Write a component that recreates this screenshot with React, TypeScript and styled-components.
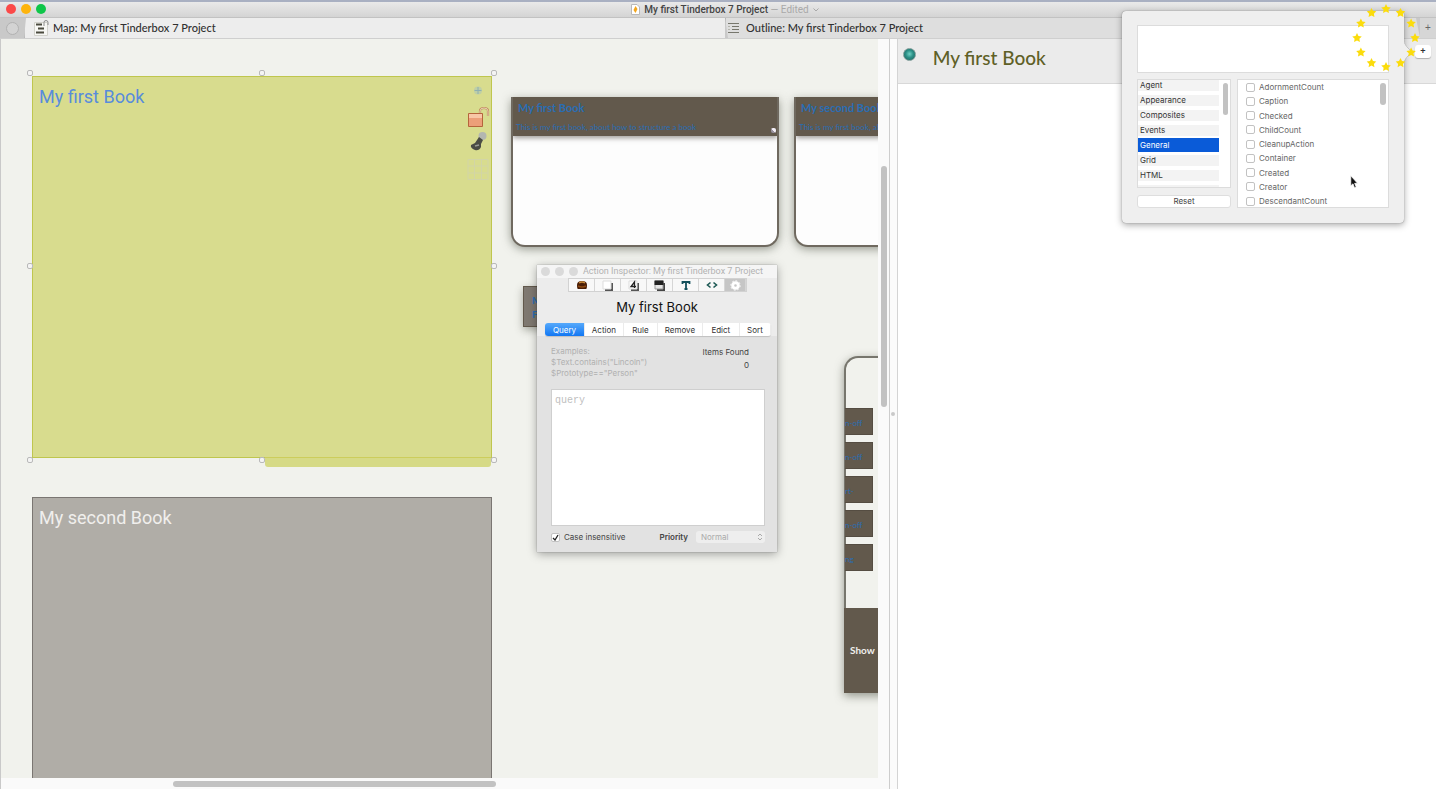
import React from 'react';
import styled, { createGlobalStyle } from 'styled-components';

const sans = '"Liberation Sans", Arial, sans-serif';
const ui = 'Inter, "Liberation Sans", sans-serif';
const human = 'Lato, "Open Sans", sans-serif';
const grotesk = 'Roboto, "Liberation Sans", sans-serif';
const brown = '#62594c';
const blue = '#2a6db3';

const Global = createGlobalStyle`
  *, *::before, *::after { box-sizing: border-box; }
  html, body { margin: 0; }
  body { font-family: ${ui}; color: #222; background: #fff; }
  button, input, textarea, select { font: inherit; color: inherit; margin: 0; }
  h1, h2, h3, p, ul { margin: 0; padding: 0; font-weight: 400; }
`;

const Window = styled.div`
  position: relative;
  display: flex;
  flex-direction: column;
  height: 100vh;
  min-height: 720px;
  overflow: hidden;
`;

const TitleBar = styled.header`
  position: relative;
  flex: none;
  display: flex;
  align-items: center;
  justify-content: center;
  height: 18px;
  border-top: 2px solid #a9b0c2;
  border-bottom: 1px solid #c2c2c2;
  background: linear-gradient(#e9e9e9, #d4d4d4);
`;

const Lights = styled.div`
  position: absolute;
  left: 6px;
  top: 2px;
  display: flex;
  gap: 5px;
`;

const Light = styled.button<{ $color: string }>`
  width: 10px;
  height: 10px;
  padding: 0;
  border: 0;
  border-radius: 50%;
  background: ${(p) => p.$color};
`;

const WindowTitle = styled.h1`
  display: flex;
  align-items: center;
  gap: 4px;
  padding-left: 14px;
  font: 10px/14px ${grotesk};
  font-weight: 500;
  color: #444;
`;

const Muted = styled.span`
  font-weight: 400;
  color: #a9a9a9;
`;

const TabBar = styled.nav`
  flex: none;
  display: grid;
  grid-template-columns: 24px minmax(0, 701fr) minmax(0, 695fr) 16px;
  height: 21px;
  background: #c9c9c9;
  border-bottom: 1px solid #cfcfcf;
`;

const TabCircle = styled.button`
  justify-self: center;
  align-self: center;
  width: 13px;
  height: 13px;
  padding: 0;
  border: 1px solid #b2b2b2;
  border-radius: 50%;
  background: #d3d3d3;
`;

const Tab = styled.button<{ $active?: boolean }>`
  position: relative;
  display: flex;
  align-items: center;
  gap: ${(p) => (p.$active ? 4 : 6)}px;
  padding: 0 0 0 ${(p) => (p.$active ? 10 : 3)}px;
  border: 0;
  background: ${(p) => (p.$active ? '#ededed' : '#dedede')};
  clip-path: ${(p) =>
    p.$active ? 'polygon(2px 0, 100% 0, 100% 100%, 0 100%)' : 'polygon(0 0, calc(100% - 4px) 0, 100% 100%, 3px 100%)'};
  box-shadow: inset 1px 0 #b5b5b5;
  font: 11px/20px ${human};
  font-weight: 500;
  color: #303030;
  text-align: left;
`;

const AddTab = styled.button`
  padding: 0;
  border: 0;
  background: #d6d6d6;
  font: 10px/20px ${sans};
  color: #666;
`;

const Main = styled.main`
  flex: 1;
  min-height: 0;
  display: grid;
  grid-template-columns: minmax(0, 623fr) 8px minmax(0, 377fr);
`;

const MapPane = styled.section`
  display: grid;
  grid-template-columns: minmax(0, 1fr) 11px;
  grid-template-rows: minmax(0, 1fr) 11px;
  border-left: 1px solid #c9c9c9;
  border-right: 1px solid #cdcdcd;
  background: #fafafa;
`;

const Canvas = styled.div`
  position: relative;
  overflow: hidden;
  background: #f1f2ed;
`;

const Placed = styled.div<{ $x: number; $y: number; $w?: number; $h?: number }>`
  position: absolute;
  left: ${(p) => p.$x}px;
  top: ${(p) => p.$y}px;
  ${(p) => (p.$w ? `width: ${p.$w}px;` : '')}
  ${(p) => (p.$h ? `height: ${p.$h}px;` : '')}
`;

const Adornment = styled(Placed)<{ $fill: string; $edge: string; $ink: string }>`
  padding: 6px;
  border: 1px solid ${(p) => p.$edge};
  background: ${(p) => p.$fill};
  color: ${(p) => p.$ink};
`;

const AdornmentTitle = styled.h2`
  font: 18px/28px ${grotesk};
`;

const AdornmentTail = styled(Placed)`
  border-top: 1px solid #cccd5c;
  border-radius: 0 0 3px 3px;
  background: #d6da86;
`;

const Handle = styled(Placed)`
  width: 6px;
  height: 6px;
  border: 1px solid #b9b9b9;
  border-radius: 2px;
  background: #f4f4f4;
`;

const AdornmentTools = styled.div`
  position: absolute;
  top: 7px;
  right: 1px;
  display: flex;
  flex-direction: column;
  align-items: center;
  width: 24px;
`;

const Card = styled(Placed)`
  overflow: hidden;
  border: 2px solid #6f695f;
  border-top: 0;
  border-radius: 0 0 14px 14px;
  background: #fdfdfd;
`;

const CardShadow = styled(Placed)`
  border-radius: 0 0 14px 14px;
  box-shadow: 0 3px 10px rgba(70, 75, 60, 0.55);
`;

const CardHead = styled.header`
  position: relative;
  height: 39px;
  padding: 3px;
  background: ${brown};
  box-shadow: 0 2px 5px rgba(60, 55, 50, 0.5);
  color: ${blue};
  white-space: nowrap;
`;

const CardTitle = styled.h3`
  padding-left: 2px;
  font: 700 11px/16px ${human};
`;

const CardText = styled.p`
  padding-top: 5px;
  font: 8px/12px ${human};
`;

const CardMark = styled.i`
  position: absolute;
  right: 1px;
  bottom: 3px;
  width: 5px;
  height: 5px;
  border-radius: 2px;
  background: linear-gradient(45deg, #9a93a0 45%, #f2eef6 50%);
`;

const NoteStub = styled(Placed)`
  padding: 6px 8px;
  border: 1px solid ${brown};
  background: #7f7971;
  box-shadow: 0 3px 8px rgba(70, 75, 60, 0.45);
  color: ${blue};
  font: 700 10px/14px ${human};
`;

const Shelf = styled(Placed)`
  display: flex;
  flex-direction: column;
  justify-content: space-between;
  border: 2px solid #77766d;
  border-width: 2px 0 0 2px;
  border-radius: 14px 0 0 0;
  background: #f1f2ed;
  box-shadow: 0 3px 10px rgba(70, 75, 60, 0.55);
`;

const ChipList = styled.ul`
  display: flex;
  flex-direction: column;
  gap: 7px;
  margin-left: -1px;
  padding-top: 50px;
  list-style: none;
`;

const Chip = styled.li`
  width: 28px;
  height: 27px;
  border: 1px solid #554d42;
  border-left: 0;
  background: ${brown};
  color: ${blue};
  font: 8px/28px ${human};
`;

const ShelfFoot = styled.div`
  height: 85px;
  margin-left: -2px;
  padding-left: 6px;
  background: ${brown};
  color: #f0efec;
  font: 700 10px/85px ${human};
`;

const VTrack = styled.div`
  display: flex;
  justify-content: center;
  padding: 127px 0 0 2px;
`;

const HTrack = styled.div`
  grid-column: 1 / -1;
  display: flex;
  align-items: center;
  padding-left: 172px;
`;

const Thumb = styled.i<{ $w: number; $h: number }>`
  width: ${(p) => p.$w}px;
  height: ${(p) => p.$h}px;
  border-radius: 3px;
  background: #c2c2c2;
`;

const Splitter = styled.div`
  display: flex;
  align-items: center;
  justify-content: center;
  border-right: 1px solid #d4d4d4;
  background: #fbfbfb;
`;

const SplitDot = styled.i`
  width: 4px;
  height: 4px;
  border-radius: 2px;
  background: #c9c9c9;
`;

const TextPane = styled.section`
  display: flex;
  flex-direction: column;
  min-width: 0;
  background: #fff;
`;

const TextHead = styled.header`
  display: flex;
  align-items: flex-start;
  height: 45px;
  padding: 6px 5px;
  border-bottom: 1px solid #d8d8d8;
  background: #ebebeb;
`;

const Orb = styled.i`
  width: 13px;
  height: 13px;
  margin: 3px 17px 0 0;
  border: 1px solid #7d9b98;
  border-radius: 50%;
  background: radial-gradient(circle at 50% 45%, #6fd0c4, #2b8f86 45%, #1d5f59);
`;

const NoteTitle = styled.h2`
  flex: 1;
  font: 19px/26px ${human};
  font-weight: 500;
  color: #5f6026;
`;

const PlusButton = styled.button`
  width: 16px;
  height: 13px;
  padding: 0;
  border: 0;
  border-radius: 3px;
  background: #fff;
  box-shadow: 0 1px 1px rgba(0, 0, 0, 0.25);
  font: 700 9px/13px ${sans};
  color: #333;
`;

const NoteBody = styled.div`
  flex: 1;
`;

/* Inspector */

const Inspector = styled.aside`
  position: absolute;
  left: 537px;
  top: 265px;
  display: flex;
  flex-direction: column;
  width: 240px;
  height: 287px;
  background: #e2e2e2;
  box-shadow: 0 2px 9px rgba(0, 0, 0, 0.35), 0 0 1px rgba(0, 0, 0, 0.4);
  font: 8px/10px ${ui};
`;

const InspectorTop = styled.div`
  flex: none;
  background: #ececec;
`;

const InspectorBar = styled.div`
  display: flex;
  align-items: center;
  gap: 5px;
  height: 13px;
  padding-left: 4px;
  background: #f5f5f5;
  color: #b2b2b2;
  white-space: nowrap;
  font: 9px/13px ${grotesk};
`;

const GreyDot = styled.i`
  width: 9px;
  height: 9px;
  border-radius: 50%;
  background: #dadada;
`;

const ToolStrip = styled.div`
  display: flex;
  width: 179px;
  height: 14px;
  margin-left: 31px;
  border: 1px solid #d2d2d2;
  background: #f8f8f8;
`;

const ToolCell = styled.button<{ $on?: boolean }>`
  flex: ${(p) => (p.$on ? '0 0 21px' : '1')};
  display: flex;
  align-items: center;
  justify-content: center;
  padding: 0;
  border: 0;
  border-right: 1px solid #d6d6d6;
  background: ${(p) => (p.$on ? '#c6c6c6' : 'transparent')};
`;

const InspectorTitle = styled.h2`
  padding: 5px 0 6px;
  text-align: center;
  font: 13px/20px ${ui};
  color: #111;
`;

const Segments = styled.div`
  display: flex;
  height: 13px;
  margin: 0 6px 0 8px;
  border-radius: 3px;
  background: #fff;
  box-shadow: 0 1px 1px rgba(0, 0, 0, 0.15);
  overflow: hidden;
`;

const Segment = styled.button<{ $w: number; $on?: boolean }>`
  flex: ${(p) => p.$w} 1 0;
  min-width: 0;
  padding: 0;
  border: 0;
  border-right: 1px solid #ebebeb;
  background: ${(p) => (p.$on ? 'linear-gradient(#56a9fb, #1277f3)' : 'transparent')};
  color: ${(p) => (p.$on ? '#fff' : '#333')};
  font: 8px/12px ${ui};
`;

const InfoRow = styled.div`
  display: flex;
  justify-content: space-between;
  padding: 10px 28px 0 14px;
  margin-bottom: 10px;
`;

const Examples = styled.p`
  color: #b0b0b0;
  line-height: 11px;
`;

const Found = styled.p`
  text-align: right;
  color: #444;
  line-height: 13px;
`;

const QueryBox = styled.textarea`
  flex: 1;
  margin: 0 12px 0 14px;
  padding: 5px 3px;
  border: 1px solid #cfcfcf;
  background: #fff;
  resize: none;
  outline: 0;
  font: 10px/12px "Liberation Mono", monospace;
  &::placeholder { color: #c0c0c0; opacity: 1; }
`;

const InspectorFoot = styled.div`
  display: flex;
  align-items: center;
  height: 26px;
  padding: 0 12px 4px 14px;
  color: #444;
`;

const CaseLabel = styled.label`
  flex: 1;
  display: flex;
  align-items: center;
  gap: 4px;
`;

const CheckBox = styled.input`
  appearance: none;
  flex: none;
  width: 9px;
  height: 9px;
  border: 1px solid #c2c2c2;
  border-radius: 2px;
  background: #fff;
  &:checked {
    background: #fff url("data:image/svg+xml,%3Csvg xmlns='http://www.w3.org/2000/svg' viewBox='0 0 9 9'%3E%3Cpath d='M2 5l2 2 3-5' fill='none' stroke='%23222' stroke-width='1.3'/%3E%3C/svg%3E") center / 9px;
  }
`;

const PriorityLabel = styled.label`
  margin-right: 8px;
  font-weight: 600;
`;

const SelectWrap = styled.span`
  position: relative;
  display: flex;
  width: 69px;
`;

const Select = styled.select`
  appearance: none;
  width: 100%;
  height: 12px;
  padding: 0 5px;
  border: 0;
  border-radius: 3px;
  background: #eee;
  color: #aaa;
  font: 8px/12px ${ui};
`;

const Carets = styled.svg`
  position: absolute;
  right: 2px;
  top: 2px;
  pointer-events: none;
`;

/* Attribute popover */

const Popover = styled.div`
  position: absolute;
  top: 11px;
  right: 32px;
  display: flex;
  flex-direction: column;
  gap: 6px;
  width: 282px;
  height: 212px;
  padding: 14px 15px;
  border-radius: 4px;
  background: #efefef;
  box-shadow: 0 2px 7px rgba(0, 0, 0, 0.35), 0 0 1px rgba(0, 0, 0, 0.5);
  font: 9px/12px ${ui};
`;

const PopArrow = styled.svg`
  position: absolute;
  left: 100%;
  top: 31px;
`;

const KeyBox = styled.textarea`
  display: block;
  width: 100%;
  height: 48px;
  border: 1px solid #dcdcdc;
  background: #fff;
  resize: none;
  outline: 0;
`;

const Columns = styled.div`
  display: grid;
  grid-template-columns: 94px 1fr;
  gap: 6px;
  height: 129px;
`;

const LeftColumn = styled.div`
  display: flex;
  flex-direction: column;
  gap: 7px;
  min-height: 0;
`;

const ListFrame = styled.div`
  flex: 1;
  display: flex;
  justify-content: space-between;
  min-height: 0;
  padding-right: 2px;
  border: 1px solid #dcdcdc;
  background: #fff;
  overflow: hidden;
`;

const CategoryList = styled.ul`
  width: 81px;
  list-style: none;
`;

const Category = styled.li<{ $on?: boolean }>`
  height: 15px;
  padding-left: 2px;
  background: ${(p) => (p.$on ? '#0a5bd8' : 'linear-gradient(#f3f3f3 11px, #fff 11px)')};
  color: ${(p) => (p.$on ? '#fff' : '#333')};
  font: 8px/11px ${ui};
  ${(p) =>
    p.$on
      ? `
    position: relative;
    height: 14px;
    margin: -2px 0 3px;
    line-height: 14px;
  `
      : ''}
`;

const ResetButton = styled.button`
  flex: none;
  height: 13px;
  padding: 0;
  border: 1px solid #dedede;
  border-radius: 3px;
  background: #fff;
  color: #444;
  font: 8px/11px ${ui};
`;

const AttributeList = styled.div`
  display: flex;
  flex-direction: column;
  justify-content: space-between;
  padding-top: 1px;
`;

const Attribute = styled.label`
  display: flex;
  align-items: center;
  gap: 4px;
  height: 12px;
  padding-left: 8px;
  color: #666;
  font: 8px/12px ${ui};
`;

const Slot = styled.div`
  padding-top: 3px;
`;

const Stars = styled.svg`
  position: absolute;
  right: 16px;
  top: 3px;
  pointer-events: none;
`;

const Cursor = styled.svg`
  position: absolute;
  right: 78px;
  top: 175px;
  pointer-events: none;
`;

const handles = [
  [26, 31], [258, 31], [490, 31],
  [26, 224], [490, 224],
  [26, 418], [258, 418], [490, 418],
];

const categories = ['Agent', 'Appearance', 'Composites', 'Events', 'General', 'Grid', 'HTML', 'Map'];
const attributes = [
  'AdornmentCount', 'Caption', 'Checked', 'ChildCount', 'CleanupAction',
  'Container', 'Created', 'Creator', 'DescendantCount',
];
const segments: [string, number][] = [
  ['Query', 40], ['Action', 39], ['Rule', 34], ['Remove', 45], ['Edict', 37], ['Sort', 31],
];
const chips = ['n-off', 'n-off', 'rt-', 'n-off', 'ng'];

const star = (cx: number, cy: number, r: number) =>
  Array.from({ length: 10 }, (_, i) => {
    const a = -Math.PI / 2 + (i * Math.PI) / 5;
    const d = i % 2 ? r * 0.5 : r;
    return `${(cx + d * Math.cos(a)).toFixed(2)},${(cy + d * Math.sin(a)).toFixed(2)}`;
  }).join(' ');

const StarRing = () => (
  <Stars width="68" height="70" viewBox="0 0 68 70" aria-hidden>
    {Array.from({ length: 12 }, (_, i) => {
      const a = (i * Math.PI) / 6;
      return <polygon key={i} points={star(34 + 29 * Math.sin(a), 35 - 29 * Math.cos(a), 5)} fill="#fbdc0c" />;
    })}
  </Stars>
);

export default function App() {
  return (
    <Window>
      <Global />
      <TitleBar>
        <Lights>
          <Light $color="#fb4948" aria-label="Close" />
          <Light $color="#fdb40d" aria-label="Minimize" />
          <Light $color="#0fc64a" aria-label="Zoom" />
        </Lights>
        <WindowTitle>
          <svg width="9" height="11" viewBox="0 0 9 11">
            <path d="M.5.5h5.500l2.500 2.500v7.500h-8z" fill="#fff" stroke="#b9b9b9" />
            <path d="M4.500 2 6.500 5 4.500 9 2.500 6z" fill="#f3a61c" />
          </svg>
          <span>My first Tinderbox 7 Project <Muted>— Edited</Muted></span>
          <svg width="6" height="4" viewBox="0 0 6 4"><path d="M.5.5 3 3 5.500.5" fill="none" stroke="#a9a9a9" /></svg>
        </WindowTitle>
      </TitleBar>

      <TabBar>
        <TabCircle aria-label="Tab options" />
        <Tab $active>
          <svg width="15" height="16" viewBox="0 0 15 16">
            <path d="M.5 2.500h13v13H.5z" fill="#f7f7f4" stroke="#d2d2cc" />
            <path d="M2 4.500h6M4 8.500h6M2 12.500h8" stroke="#4a4a3e" strokeWidth="1.800" />
            <path d="M10 6V2.500q0-2 2-2t2 2V5" fill="none" stroke="#8b8b8b" />
          </svg>
          Map: My first Tinderbox 7 Project
        </Tab>
        <Tab>
          <svg width="12" height="12" viewBox="0 0 12 12">
            <path d="M0 1.500h11M4 4.500h7M4 7.500h7M0 10.500h11" stroke="#77776d" />
            <path d="M0 4.500h2M0 7.500h2" stroke="#b5b5ad" />
          </svg>
          Outline: My first Tinderbox 7 Project
        </Tab>
        <AddTab aria-label="New tab">+</AddTab>
      </TabBar>

      <Main>
        <MapPane>
          <Canvas>
            <Adornment $x={31} $y={37} $w={460} $h={382} $fill="#d8dc8e" $edge="#bfc64e" $ink="#588cdc">
              <AdornmentTitle>My first Book</AdornmentTitle>
              <AdornmentTools>
                <svg width="24" height="98" viewBox="0 0 24 98">
                  <circle cx="12" cy="6.500" r="4" fill="#bfcfa6" />
                  <path d="M12 3v7M8.500 6.500h7" stroke="#8fb0b0" />
                  <path d="M14 33v-6q0-3 4-3t4 3v5" fill="none" stroke="#c08a5c" strokeWidth="2.200" />
                  <path d="M14 33v-6q0-3 4-3t4 3v5" fill="none" stroke="#f2e2c4" strokeWidth=".8" />
                  <path d="M2.500 29.500h14v13h-14z" fill="#ec9f79" stroke="#b5653c" />
                  <path d="M3 32h13" stroke="#f8c7a6" strokeWidth="4" />
                  <circle cx="16.500" cy="52" r="4" fill="#b3b6b0" />
                  <path d="M13 53l4 3-2 4 0 3q-2 4-6 3-5-2-4-5l4-2z" fill="#4b4d45" />
                  <path d="M9 62l4-1" stroke="#9a9c96" strokeWidth="1.500" />
                  <path d="M2 75.500h20v20H2zM2 82h20M2 89h20M8.500 75v21M15.500 75v21" fill="none" stroke="#d2d5a6" />
                </svg>
              </AdornmentTools>
            </Adornment>
            <AdornmentTail $x={264} $y={418} $w={226} $h={10} />
            {handles.map(([x, y]) => <Handle key={`${x}-${y}`} $x={x} $y={y} />)}

            <Adornment $x={31} $y={458} $w={460} $h={400} $fill="#b0ada7" $edge="#7a7672" $ink="#f0efed">
              <AdornmentTitle>My second Book</AdornmentTitle>
            </Adornment>

            <CardShadow $x={510} $y={58} $w={268} $h={149} />
            <Card $x={510} $y={58} $w={268} $h={150}>
              <CardHead>
                <CardTitle>My first Book</CardTitle>
                <CardText>This is my first book, about how to structure a book</CardText>
                <CardMark />
              </CardHead>
            </Card>
            <CardShadow $x={793} $y={58} $w={268} $h={149} />
            <Card $x={793} $y={58} $w={268} $h={150}>
              <CardHead>
                <CardTitle>My second Book</CardTitle>
                <CardText>This is my first book, about how to structure a book</CardText>
              </CardHead>
            </Card>

            <NoteStub $x={522} $y={247} $w={90} $h={41}>My<br />First</NoteStub>

            <Shelf $x={843} $y={317} $w={200} $h={337}>
              <ChipList>
                {chips.map((c, i) => <Chip key={i}>{c}</Chip>)}
              </ChipList>
              <ShelfFoot>Show</ShelfFoot>
            </Shelf>
          </Canvas>
          <VTrack><Thumb $w={6} $h={241} /></VTrack>
          <HTrack><Thumb $w={323} $h={6} /></HTrack>
        </MapPane>
        <Splitter><SplitDot /></Splitter>
        <TextPane>
          <TextHead>
            <Orb />
            <NoteTitle>My first Book</NoteTitle>
            <PlusButton aria-label="Add attribute">+</PlusButton>
          </TextHead>
          <NoteBody />
        </TextPane>
      </Main>

      <Inspector>
        <InspectorTop>
          <InspectorBar>
            <GreyDot /><GreyDot /><GreyDot />
            <span>Action Inspector: My first Tinderbox 7 Project</span>
          </InspectorBar>
          <ToolStrip>
            <ToolCell aria-label="Tinderbox">
              <svg width="12" height="10" viewBox="0 0 12 10">
                <path d="M1 5q0-4 5-4t5 4-1 4H2Q1 9 1 5z" fill="#4a1d06" />
                <path d="M3 3q3-2 6 0" fill="none" stroke="#c98a3a" strokeWidth="1.500" />
                <path d="M2 6q4 2 8 0" fill="none" stroke="#8d4a12" strokeWidth="1.500" />
              </svg>
            </ToolCell>
            <ToolCell aria-label="Document">
              <svg width="12" height="11" viewBox="0 0 12 11">
                <path d="M3 3h8v8H3z" fill="#555" /><path d="M1 1h8v8H1z" fill="#fff" stroke="#ddd" />
              </svg>
            </ToolCell>
            <ToolCell aria-label="Properties">
              <svg width="12" height="11" viewBox="0 0 12 11">
                <path d="M3 3h8v8H3z" fill="#555" /><path d="M1 1h8v8H1z" fill="#fff" stroke="#ddd" />
                <path d="M6.500 8V2L3 6.500h5" fill="none" stroke="#222" strokeWidth="1.300" />
              </svg>
            </ToolCell>
            <ToolCell aria-label="Appearance">
              <svg width="12" height="11" viewBox="0 0 12 11">
                <path d="M3 3h8v8H3z" fill="#444" /><path d="M1 1h8v8H1z" fill="#e6e6e6" stroke="#999" />
                <path d="M.5.5h9V5h-9z" fill="#222" />
              </svg>
            </ToolCell>
            <ToolCell aria-label="Text">
              <svg width="10" height="9" viewBox="0 0 10 9">
                <path d="M1.500 3V1h7v2M5 1v7M3.500 8h3" fill="none" stroke="#14505c" strokeWidth="1.800" />
              </svg>
            </ToolCell>
            <ToolCell aria-label="Export">
              <svg width="12" height="8" viewBox="0 0 12 8">
                <path d="M4.500 1.500 1.500 4l3 2.500M7.500 1.500l3 2.500-3 2.500" fill="none" stroke="#1f5a55" strokeWidth="1.600" />
              </svg>
            </ToolCell>
            <ToolCell $on aria-label="Action">
              <svg width="11" height="11" viewBox="0 0 11 11">
                <circle cx="5.500" cy="5.500" r="2.800" fill="none" stroke="#fff" strokeWidth="3" />
                <circle cx="5.500" cy="5.500" r="4.700" fill="none" stroke="#fff" strokeDasharray="1.800 1.800" />
              </svg>
            </ToolCell>
          </ToolStrip>
          <InspectorTitle>My first Book</InspectorTitle>
          <Segments>
            {segments.map(([label, w], i) => (
              <Segment key={label} $w={w} $on={i === 0}>{label}</Segment>
            ))}
          </Segments>
        </InspectorTop>
        <InfoRow>
          <Examples>Examples:<br />$Text.contains("Lincoln")<br />$Prototype=="Person"</Examples>
          <Found>Items Found<br />0</Found>
        </InfoRow>
        <QueryBox placeholder="query" aria-label="Query" />
        <InspectorFoot>
          <CaseLabel>
            <CheckBox type="checkbox" defaultChecked />
            Case insensitive
          </CaseLabel>
          <PriorityLabel htmlFor="priority">Priority</PriorityLabel>
          <SelectWrap>
            <Select id="priority" defaultValue="Normal"><option>Normal</option></Select>
            <Carets width="6" height="8" viewBox="0 0 6 8">
              <path d="M1 3l2-2 2 2M1 5l2 2 2-2" fill="none" stroke="#aaa" />
            </Carets>
          </SelectWrap>
        </InspectorFoot>
      </Inspector>

      <Popover>
        <PopArrow width="9" height="20" viewBox="0 0 9 20">
          <path d="M0 0q1 4 8 10-7 6-8 10z" fill="#efefef" />
          <path d="M0 0q1 4 8 10-7 6-8 10" fill="none" stroke="#c4c4c4" />
        </PopArrow>
        <KeyBox aria-label="Key attributes" />
        <Columns>
          <LeftColumn>
            <ListFrame>
              <CategoryList>
                {categories.map((c) => <Category key={c} $on={c === 'General'}>{c}</Category>)}
              </CategoryList>
              <Slot><Thumb as="div" $w={5} $h={32} /></Slot>
            </ListFrame>
            <ResetButton>Reset</ResetButton>
          </LeftColumn>
          <ListFrame>
            <AttributeList>
              {attributes.map((a) => (
                <Attribute key={a}><CheckBox type="checkbox" />{a}</Attribute>
              ))}
            </AttributeList>
            <Slot><Thumb as="div" $w={6} $h={22} /></Slot>
          </ListFrame>
        </Columns>
      </Popover>

      <StarRing />
      <Cursor width="8" height="14" viewBox="0 0 8 14">
        <path d="M.8.8v10l2.200-2 1.500 4 1.700-.7-1.600-3.800H7.500z" fill="#111" stroke="#fff" strokeWidth=".7" />
      </Cursor>
    </Window>
  );
}
